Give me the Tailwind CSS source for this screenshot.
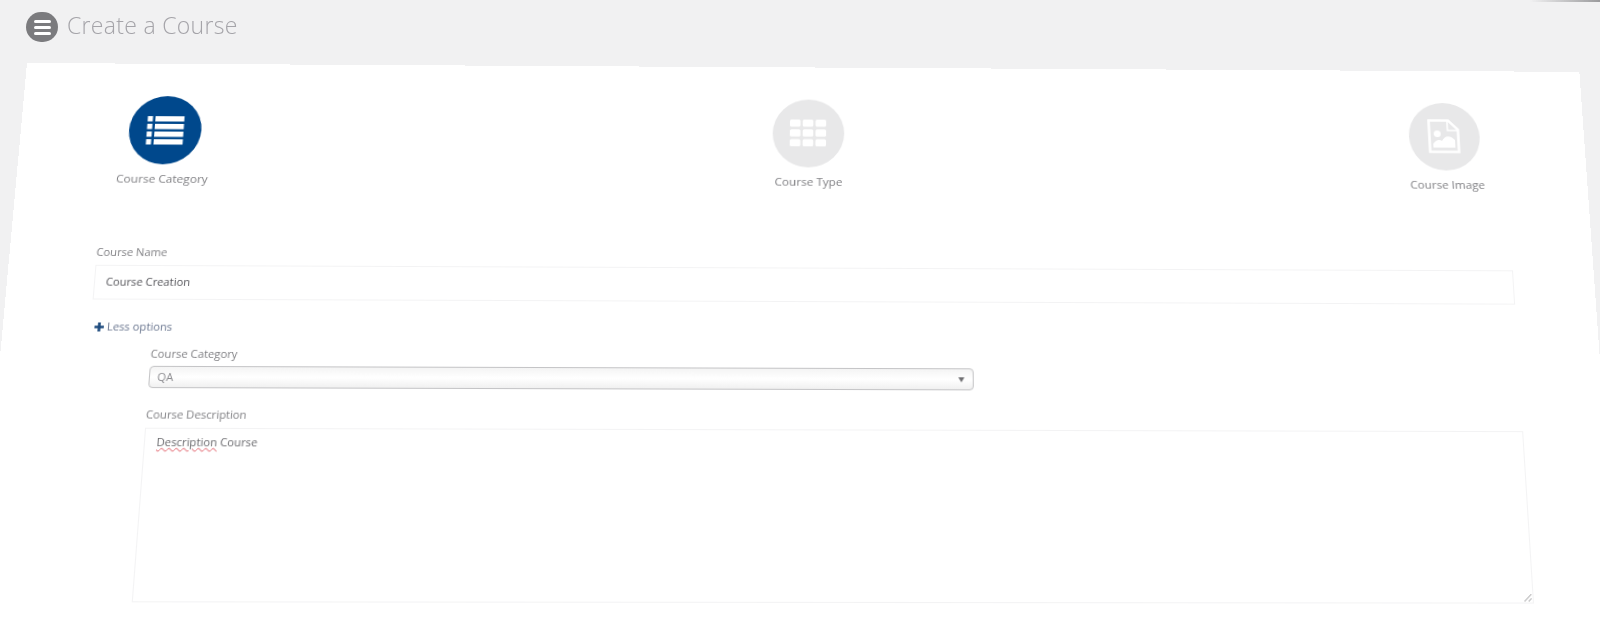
<!doctype html>
<html>

<head>
    <meta charset="UTF-8">
    <meta name="viewport" content="width=device-width, initial-scale=1.0">
    <script src="https://cdn.jsdelivr.net/npm/@tailwindcss/browser@4"></script>
</head>

<body class="bg-[#f1f1f2] font-['Open_Sans',sans-serif] overflow-hidden">
    <div class="relative h-[639px] w-[1600px] overflow-hidden blur-[0.6px]">
        <!-- smear in the top right corner of the photo -->
        <div class="absolute right-0 top-0 w-[70px] h-[2px] bg-gradient-to-r from-transparent to-[#9a9a9c]"></div>

        <!-- header -->
        <header class="flex items-center h-[63px] pl-[26px] pb-[9px]">
            <div class="flex flex-col items-center justify-center gap-[3px] w-[32px] h-[30px] rounded-full bg-[#7b7b7e]">
                <span class="block w-[17px] h-[3px] rounded-full bg-white"></span>
                <span class="block w-[17px] h-[3px] rounded-full bg-white"></span>
                <span class="block w-[17px] h-[3px] rounded-full bg-white"></span>
            </div>
            <h1 class="ml-[9px] mb-[3px] text-[23px] leading-none font-light tracking-[0.3px] text-[#a5a4a9]">Create a Course</h1>
        </header>

        <!-- card, tilted the way the photographed screen is -->
        <main class="ml-[27px] w-[1552px] h-[590px] bg-white origin-top-left [transform:matrix3d(1.0143,0.005798,0,0.000009059,-0.08707,0.9484,0,-0.00009981,0,0,1,0,0,0,0,1)]">
            <!-- steps -->
            <div class="flex justify-between px-[91px] pt-[33.5px]">
                <div class="flex flex-col items-center w-[100px]">
                    <div class="flex items-center justify-center w-[71px] h-[71px] rounded-full bg-[#00488c]">
                        <svg width="37" height="31" viewBox="0 0 37 31" fill="#fff">
                            <rect x="0.5" y="1" width="5" height="5.5" />
                            <rect x="8" y="1" width="28.5" height="5.5" />
                            <rect x="0.5" y="9" width="5" height="5.5" />
                            <rect x="8" y="9" width="28.5" height="5.5" />
                            <rect x="0.5" y="17" width="5" height="5.5" />
                            <rect x="8" y="17" width="28.5" height="5.5" />
                            <rect x="0.5" y="25" width="5" height="5.5" />
                            <rect x="8" y="25" width="28.5" height="5.5" />
                        </svg>
                    </div>
                    <span class="mt-[8.5px] ml-[2px] text-[11.6px] leading-[14px] whitespace-nowrap text-[#808084]">Course Category</span>
                </div>
                <div class="flex flex-col items-center w-[100px]">
                    <div class="flex items-center justify-center w-[71px] h-[71px] rounded-full bg-[#e8e8e9]">
                        <svg width="36" height="28" viewBox="0 0 36 28" fill="#fff">
                            <rect x="0" y="0" width="10.5" height="7.5" rx="1.5" />
                            <rect x="12.75" y="0" width="10.5" height="7.5" rx="1.5" />
                            <rect x="25.5" y="0" width="10.5" height="7.5" rx="1.5" />
                            <rect x="0" y="10.25" width="10.5" height="7.5" rx="1.5" />
                            <rect x="12.75" y="10.25" width="10.5" height="7.5" rx="1.5" />
                            <rect x="25.5" y="10.25" width="10.5" height="7.5" rx="1.5" />
                            <rect x="0" y="20.5" width="10.5" height="7.5" rx="1.5" />
                            <rect x="12.75" y="20.5" width="10.5" height="7.5" rx="1.5" />
                            <rect x="25.5" y="20.5" width="10.5" height="7.5" rx="1.5" />
                        </svg>
                    </div>
                    <span class="mt-[8.5px] ml-[2px] text-[11.6px] leading-[14px] whitespace-nowrap text-[#808084]">Course Type</span>
                </div>
                <div class="flex flex-col items-center w-[100px]">
                    <div class="flex items-center justify-center w-[71px] h-[71px] rounded-full bg-[#e8e8e9]">
                        <svg width="32" height="36" viewBox="0 0 32 36" fill="none">
                            <path d="M1.5 1.5H21L30.5 11V34.5H1.5Z" stroke="#fff" stroke-width="2.5" />
                            <path d="M20 2V12H30" stroke="#fff" stroke-width="1.5" />
                            <circle cx="9.5" cy="15.5" r="3.5" fill="#fff" />
                            <path d="M5 30V26C8 22 11 21 14 23C17 18 21 16 27 22V30Z" fill="#fff" />
                        </svg>
                    </div>
                    <span class="mt-[8.5px] ml-[2px] text-[11.6px] leading-[14px] whitespace-nowrap text-[#808084]">Course Image</span>
                </div>
            </div>

            <!-- form -->
            <form class="pl-[84px] w-[1471.5px] mt-[61px]">
                <label class="block text-[10.8px] leading-[14px] text-[#808084]">Course Name</label>
                <div class="mt-[6px] h-[35px] flex items-center px-[10.5px] border border-[#f3f3f4] text-[10.8px] text-[#55555a]">Course Creation</div>

                <div class="flex items-center mt-[20px] ml-[4px] text-[10.8px] leading-[14px] text-[#6b7790]">
                    <svg class="mr-[3px]" width="9" height="9" viewBox="0 0 9 9" fill="#1d4a7d">
                        <path d="M3.2 0H5.8V3.2H9V5.8H5.8V9H3.2V5.8H0V3.2H3.2Z" />
                    </svg>
                    Less options
                </div>

                <div class="ml-[60px]">
                    <label class="block mt-[13px] text-[10.8px] leading-[14px] text-[#808084]">Course Category</label>
                    <div class="relative flex items-center w-[795px] h-[22px] mt-[5px] pl-[7px] rounded-[4px] border border-[#c4c4c6] bg-gradient-to-b from-[#f4f4f4] via-white to-[#f0f0f0] text-[10.8px] text-[#8c8c90]">
                        QA
                        <span class="absolute right-[8px] top-[8px] w-0 h-0 border-x-[3.5px] border-x-transparent border-t-[5px] border-t-[#6f6f72]"></span>
                    </div>

                    <label class="block mt-[19px] text-[10.8px] leading-[14px] text-[#808084]">Course Description</label>
                    <div class="relative h-[168px] mt-[6px] px-[11px] py-[5px] border border-[#f3f3f4] text-[10.8px] leading-[16px] text-[#6a6a6e]">
                        <span class="underline decoration-wavy decoration-[#e0606a] decoration-1 underline-offset-1">Description</span> Course
                        <svg class="absolute right-0 bottom-0" width="9" height="9" viewBox="0 0 9 9" stroke="#9a9a9c" stroke-width="1">
                            <path d="M1 8L8 1M5 8L8 5" />
                        </svg>
                    </div>
                </div>
            </form>
        </main>
    </div>
</body>

</html>
